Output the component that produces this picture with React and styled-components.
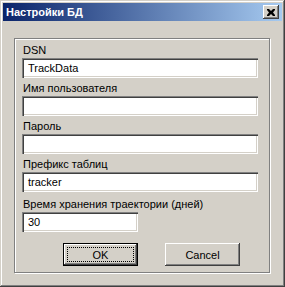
import React from "react";
import styled, { createGlobalStyle } from "styled-components";

const Global = createGlobalStyle`
  html, body { margin: 0; padding: 0; background: #d4d0c8; }
  * { box-sizing: border-box; }
`;

const fields = [
  { label: "DSN", value: "TrackData" },
  { label: "Имя пользователя", value: "" },
  { label: "Пароль", value: "" },
  { label: "Префикс таблиц", value: "tracker" },
  { label: "Время хранения траектории (дней)", value: "30", short: true },
];

const Window = styled.div`
  width: 285px;
  height: 287px;
  padding: 3px;
  background: #d4d0c8;
  box-shadow: inset -1px -1px #404040, inset 1px 1px #d4d0c8,
    inset -2px -2px #808080, inset 2px 2px #ffffff;
  display: flex;
  flex-direction: column;
  font-family: Tahoma, "Liberation Sans", sans-serif;
  font-size: 11px;
  color: #000;
`;

const TitleBar = styled.div`
  height: 18px;
  display: flex;
  align-items: center;
  justify-content: space-between;
  padding: 0 3px 0 3px;
  background: linear-gradient(to right, #0a246a, #a6caf0);
`;

const Title = styled.span`
  color: #fff;
  font-weight: bold;
  font-size: 11px;
`;

const CloseButton = styled.div`
  width: 16px;
  height: 14px;
  background: #d4d0c8;
  box-shadow: inset -1px -1px #404040, inset 1px 1px #ffffff,
    inset -2px -2px #808080;
  display: flex;
  align-items: center;
  justify-content: center;
`;

const Group = styled.div`
  margin: 17px 12px 0 11px;
  height: 235px;
  border: 1px solid #808080;
  box-shadow: inset 1px 1px #ffffff, 1px 1px #ffffff;
  padding: 4px 11px 0 7px;
  display: flex;
  flex-direction: column;
`;

const Row = styled.div`
  display: flex;
  flex-direction: column;
  margin-bottom: 3px;
  margin-top: ${(p) => (p.short ? "2px" : "0")};
`;

const Label = styled.div`
  height: 15px;
  line-height: 15px;
  padding-left: 1px;
`;

const Field = styled.div`
  width: ${(p) => (p.short ? "116px" : "236px")};
  height: 20px;
  background: #fff;
  box-shadow: inset 1px 1px #808080, inset 2px 2px #404040,
    inset -1px -1px #ffffff, inset -2px -2px #d4d0c8;
  padding: 0 6px;
  line-height: 20px;
  white-space: nowrap;
`;

const Buttons = styled.div`
  display: flex;
  gap: 27px;
  margin-top: 8px;
  padding-left: 41px;
`;

const Button = styled.div`
  width: 75px;
  height: 23px;
  display: flex;
  align-items: center;
  justify-content: center;
  background: #d4d0c8;
  box-shadow: ${(p) =>
    p.primary
      ? "inset 0 0 0 1px #000, inset -2px -2px #404040, inset 2px 2px #ffffff, inset -3px -3px #808080"
      : "inset -1px -1px #404040, inset 1px 1px #ffffff, inset -2px -2px #808080"};
  position: relative;
`;

const Focus = styled.div`
  position: absolute;
  inset: 4px;
  border: 1px dotted #000;
`;

export default function App() {
  return (
    <>
      <Global />
      <Window>
        <TitleBar>
          <Title>Настройки БД</Title>
          <CloseButton>
            <svg width="8" height="7" viewBox="0 0 8 7">
              <path d="M0 0h2l2 2 2-2h2v1L6 3.5 8 6v1H6L4 5 2 7H0V6l2-2.5L0 1z" fill="#000" />
            </svg>
          </CloseButton>
        </TitleBar>
        <Group>
          {fields.map((f) => (
            <Row key={f.label} short={f.short}>
              <Label>{f.label}</Label>
              <Field short={f.short}>{f.value}</Field>
            </Row>
          ))}
          <Buttons>
            <Button primary>
              <Focus />
              OK
            </Button>
            <Button>Cancel</Button>
          </Buttons>
        </Group>
      </Window>
    </>
  );
}
